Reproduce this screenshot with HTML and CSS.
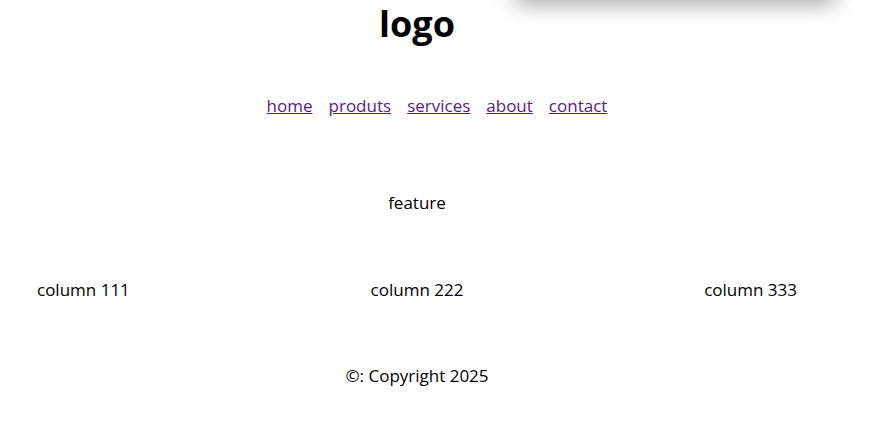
FILE: index.html
```html
<!DOCTYPE html>
<html lang="en">

<head>
    <meta charset="UTF-8">
    <meta name="viewport" content="width=device-width, initial-scale=1.0">
    <title>Home</title>
    <link rel="stylesheet" href="styles.css">
</head>

<body>
    <div class="popup"></div>
    <div class="page">
        <header class="header">
            <h1 class="logo">logo</h1>
            <ul class="nav">
                <li><a href="#">home</a></li>
                <li><a href="#">produts</a></li>
                <li><a href="#">services</a></li>
                <li><a href="#">about</a></li>
                <li><a href="#">contact</a></li>
            </ul>
        </header>
        <section class="feature">feature</section>
        <section class="columns">
            <div class="column">column 111</div>
            <div class="column">column 222</div>
            <div class="column">column 333</div>
        </section>
        <footer class="footer">&copy;: Copyright 2025</footer>
    </div>
</body>

</html>
```

FILE: styles.css
```css
body {
    margin: 0;
    background: white;
    color: black;
    font-family: "Open Sans", "Noto Sans CJK SC", sans-serif;
    font-size: 17px;
    overflow: hidden;
}

.popup {
    position: absolute;
    top: -60px;
    left: 515px;
    width: 320px;
    height: 60px;
    background: white;
    box-shadow: 0 4px 22px rgba(0, 0, 0, 0.35);
}

.page {
    width: 834px;
    text-align: center;
}

.logo {
    margin: 0;
    padding-top: 2px;
    font-size: 36px;
    line-height: 44px;
    font-weight: bold;
}

.nav {
    margin: 48px 0 0;
    padding-left: 40px;
    list-style: none;
    display: flex;
    justify-content: center;
    gap: 16px;
    font-size: 17px;
    line-height: 24px;
}

.nav a {
    color: #551a8b;
}

.feature {
    margin-top: 73px;
    line-height: 24px;
}

.columns {
    margin-top: 63px;
    display: flex;
    justify-content: space-between;
    padding: 0 37px;
    line-height: 24px;
}

.footer {
    margin-top: 62px;
    line-height: 24px;
}
```
